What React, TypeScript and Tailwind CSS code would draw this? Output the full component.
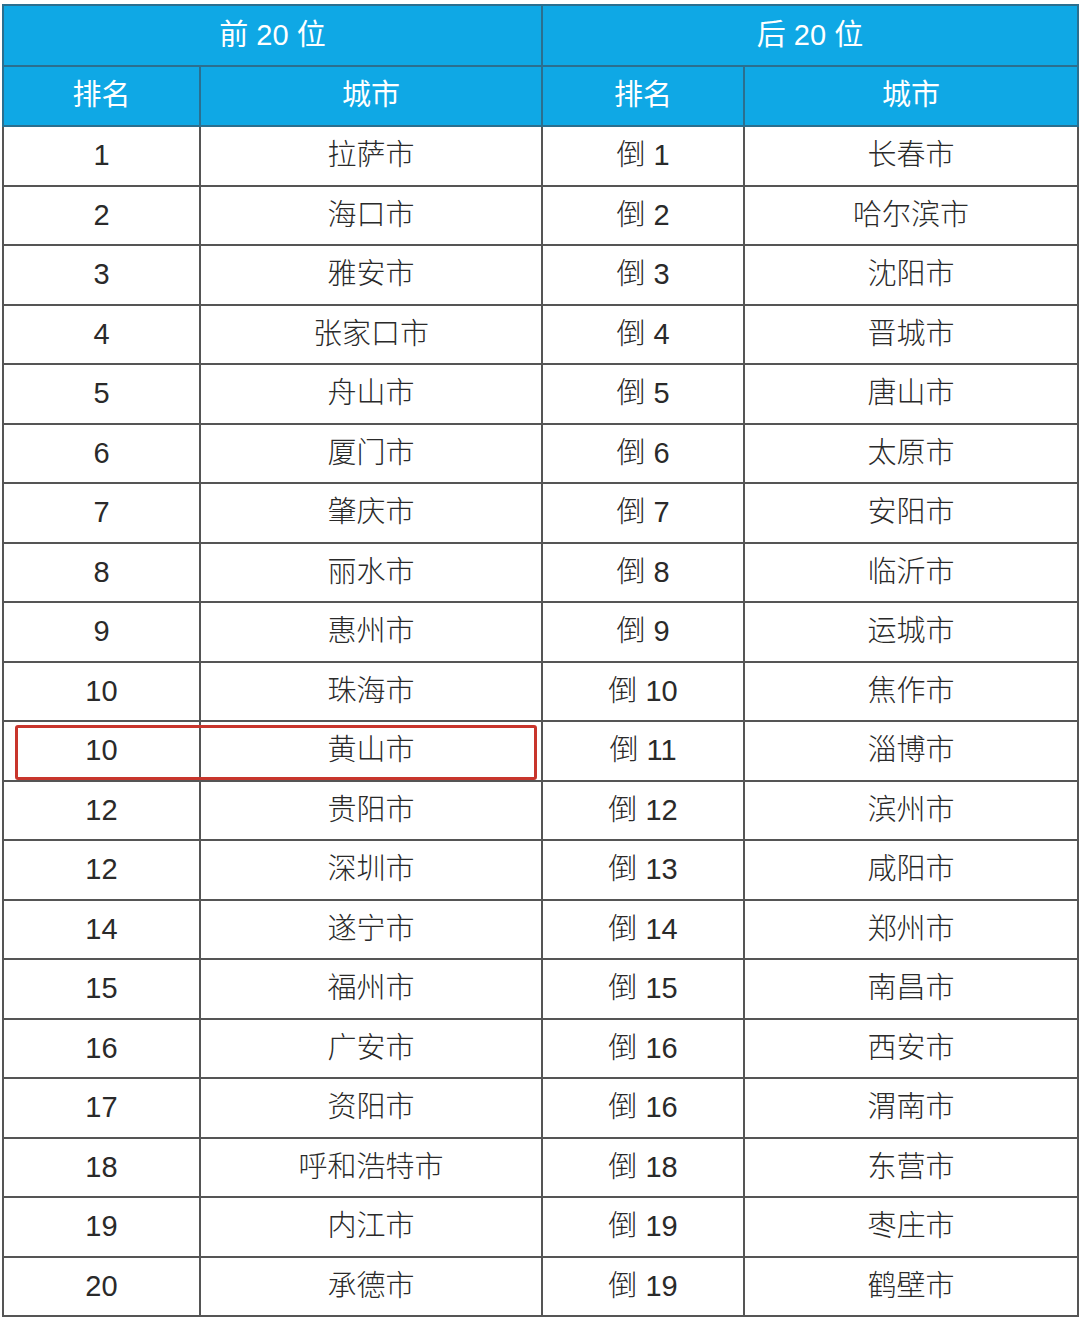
import * as React from "react";

const top20 = [
	["1", "拉萨市"],
	["2", "海口市"],
	["3", "雅安市"],
	["4", "张家口市"],
	["5", "舟山市"],
	["6", "厦门市"],
	["7", "肇庆市"],
	["8", "丽水市"],
	["9", "惠州市"],
	["10", "珠海市"],
	["10", "黄山市"],
	["12", "贵阳市"],
	["12", "深圳市"],
	["14", "遂宁市"],
	["15", "福州市"],
	["16", "广安市"],
	["17", "资阳市"],
	["18", "呼和浩特市"],
	["19", "内江市"],
	["20", "承德市"],
];

const bottom20 = [
	["倒 1", "长春市"],
	["倒 2", "哈尔滨市"],
	["倒 3", "沈阳市"],
	["倒 4", "晋城市"],
	["倒 5", "唐山市"],
	["倒 6", "太原市"],
	["倒 7", "安阳市"],
	["倒 8", "临沂市"],
	["倒 9", "运城市"],
	["倒 10", "焦作市"],
	["倒 11", "淄博市"],
	["倒 12", "滨州市"],
	["倒 13", "咸阳市"],
	["倒 14", "郑州市"],
	["倒 15", "南昌市"],
	["倒 16", "西安市"],
	["倒 16", "渭南市"],
	["倒 18", "东营市"],
	["倒 19", "枣庄市"],
	["倒 19", "鹤壁市"],
];

export default function App() {
	return (
		<div
			className="w-[1080px] h-[1332px] bg-white pt-[4px] pl-[2px]"
			style={{ fontFamily: '"Liberation Sans", "Noto Sans CJK SC", sans-serif' }}
		>
			<div className="relative w-[1075px]">
				<table className="w-[1075px] border-collapse table-fixed text-[29px] text-[#2a2a2a] font-light">
					<colgroup>
						<col className="w-[197px]" />
						<col className="w-[342px]" />
						<col className="w-[202px]" />
						<col className="w-[334px]" />
					</colgroup>
					<thead className="bg-[#0fa8e5] text-white">
						<tr className="h-[61px]">
							<th colSpan={2} className="border-2 border-[#2b6f8f] font-normal">
								前 20 位
							</th>
							<th colSpan={2} className="border-2 border-[#2b6f8f] font-normal">
								后 20 位
							</th>
						</tr>
						<tr className="h-[60px]">
							<th className="border-2 border-[#2b6f8f] font-normal">排名</th>
							<th className="border-2 border-[#2b6f8f] font-normal">城市</th>
							<th className="border-2 border-[#2b6f8f] font-normal">排名</th>
							<th className="border-2 border-[#2b6f8f] font-normal">城市</th>
						</tr>
					</thead>
					<tbody>
						{top20.map((row, i) => (
							<tr key={i} className="h-[59.5px]">
								<td className="border-2 border-[#555] text-center">{row[0]}</td>
								<td className="border-2 border-[#555] text-center">{row[1]}</td>
								<td className="border-2 border-[#555] text-center">{bottom20[i][0]}</td>
								<td className="border-2 border-[#555] text-center">{bottom20[i][1]}</td>
							</tr>
						))}
					</tbody>
				</table>
				{/* highlight around 黄山市 */}
				<div className="absolute left-[13px] top-[721px] w-[522px] h-[55px] border-[3px] border-[#c8352c] rounded-[3px] pointer-events-none" />
			</div>
		</div>
	);
}
